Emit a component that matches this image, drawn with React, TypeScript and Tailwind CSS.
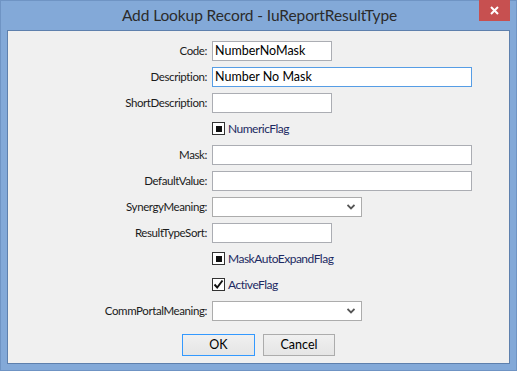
import React from "react";

const font = { fontFamily: 'Lato, "Open Sans", "Liberation Sans", sans-serif' };

function Label({ text }: { text: string }) {
  return (
    <div className="flex h-5 items-center justify-end text-[11.5px] tracking-[-0.4px] text-[#1b1b1b]">
      {text}
    </div>
  );
}

function TextBox({ value, width, focused }: { value?: string; width: string; focused?: boolean }) {
  return (
    <div
      className={`flex h-5 items-center border bg-white px-[2px] text-[12.5px] text-black ${width} ${
        focused ? "border-[#569de5]" : "border-[#abadb3]"
      }`}
    >
      {value}
    </div>
  );
}

function Select() {
  return (
    <div className="flex h-5 w-[150px] items-center justify-end border border-[#acacac] bg-white pr-[6px]">
      <svg width="8" height="6" viewBox="0 0 8 6">
        <path d="M0.5 1 L4 4.5 L7.5 1" fill="none" stroke="#555" strokeWidth="1.8" />
      </svg>
    </div>
  );
}

function Check({ text, checked }: { text: string; checked?: boolean }) {
  return (
    <div className="flex h-5 items-start pt-[3px]">
      <div className="flex h-[13px] w-[13px] items-center justify-center border border-[#333] bg-white">
        {checked ? (
          <svg width="11" height="11" viewBox="0 0 11 11">
            <path d="M1.5 5.5 L4.2 8.5 L9.5 1.5" fill="none" stroke="#111" strokeWidth="1.9" />
          </svg>
        ) : (
          <div className="h-[6px] w-[6px] bg-[#111]" />
        )}
      </div>
      <span className="ml-[3px] -mt-[3px] text-[12px] leading-5 tracking-[-0.5px] text-[#1c2a63]">
        {text}
      </span>
    </div>
  );
}

export default function App() {
  return (
    <div className="h-[371px] w-[517px] overflow-hidden" style={font}>
      <div className="relative flex h-full w-full flex-col border border-[#6f94c4] bg-[#83a9d8] px-[6px] pb-[6px]">
        <div className="flex h-[29px] items-center justify-center pl-[2px] text-[15.5px] tracking-[-0.1px] text-[#2b2b2b]">
          Add Lookup Record - IuReportResultType
        </div>
        <div className="absolute right-[6px] top-[-1px] flex h-[21px] w-[31px] items-center justify-center bg-[#c75050]">
          <svg width="9" height="9" viewBox="0 0 9 9">
            <path d="M1 1 L8 8 M8 1 L1 8" stroke="#fff" strokeWidth="2" />
          </svg>
        </div>
        <div className="flex flex-1 flex-col border border-[#5e80ad] bg-[#f0f0f0] pt-[10px]">
          <div className="grid grid-cols-[199px_1fr] gap-x-[5px] gap-y-[6px]">
            <Label text="Code:" />
            <TextBox value="NumberNoMask" width="w-[120px]" />
            <Label text="Description:" />
            <TextBox value="Number No Mask" width="w-[260px]" focused />
            <Label text="ShortDescription:" />
            <TextBox width="w-[120px]" />
            <div />
            <Check text="NumericFlag" />
            <Label text="Mask:" />
            <TextBox width="w-[260px]" />
            <Label text="DefaultValue:" />
            <TextBox width="w-[260px]" />
            <Label text="SynergyMeaning:" />
            <Select />
            <Label text="ResultTypeSort:" />
            <TextBox width="w-[120px]" />
            <div />
            <Check text="MaskAutoExpandFlag" />
            <div />
            <Check text="ActiveFlag" checked />
            <Label text="CommPortalMeaning:" />
            <Select />
          </div>
          <div className="mt-[13px] flex justify-center gap-[8px]">
            <button className="h-[22px] w-[73px] border border-[#3399ff] bg-gradient-to-b from-[#f0f0f0] to-[#e5e5e5] text-[12.5px] text-black">
              OK
            </button>
            <button className="h-[22px] w-[72px] border border-[#acacac] bg-gradient-to-b from-[#f0f0f0] to-[#e5e5e5] text-[12.5px] text-black">
              Cancel
            </button>
          </div>
        </div>
      </div>
    </div>
  );
}
